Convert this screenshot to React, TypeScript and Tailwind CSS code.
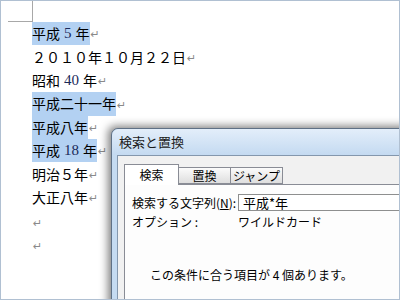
const jp = "font-['Noto_Sans_CJK_JP','Liberation_Sans',sans-serif]";
const serif = "font-['Liberation_Serif','Noto_Sans_CJK_JP',serif]";

function Mark() {
  return <span className="ml-[1px] text-[11px] text-[#8a8a8a] font-['DejaVu_Sans',sans-serif]">↵</span>;
}

function Row({ hl, children }: { hl?: boolean; children: React.ReactNode }) {
  return (
    <div className="flex h-[23.4px] items-stretch">
      <span className={`flex items-center ${hl ? "bg-[#b3d1f2]" : ""}`}>{children}</span>
      <span className="flex items-center pt-[4px]">
        <Mark />
      </span>
    </div>
  );
}

function Num({ v }: { v: string }) {
  return <span className={`${serif} text-[15px] px-[4px] text-[#1a2a5a]`}>{v}</span>;
}

export default function App() {
  return (
    <div className={`relative w-[400px] h-[300px] overflow-hidden border border-[#b0c0d2] bg-white ${jp} text-[14px] text-black`}>
      {/* page corner mark */}
      <div className="ml-[7px] w-[25px] h-[21px] border-r border-b border-[#a8a8a8]" />

      {/* document */}
      <div className="pl-[31px]">
        <Row hl>
          平成<Num v="5" />年
        </Row>
        <Row>２０１０年１０月２２日</Row>
        <Row>
          昭和<Num v="40" />年
        </Row>
        <Row hl>平成二十一年</Row>
        <Row hl>平成八年</Row>
        <Row hl>
          平成<Num v="18" />年
        </Row>
        <Row>明治５年</Row>
        <Row>大正八年</Row>
        <div className="h-[23.4px] flex items-end"><Mark /></div>
        <div className="h-[23.4px] flex items-end"><Mark /></div>
      </div>

      {/* find & replace dialog */}
      <div className="absolute left-[110px] top-[127px] right-[-20px] bottom-[-20px] rounded-tl-[7px] border border-[#5f7186] bg-[#c5dbf1] shadow-[-3px_-2px_8px_rgba(0,0,0,0.5)]">
        <div className="h-[26px] rounded-tl-[7px] bg-gradient-to-b from-[#e3eefa] to-[#c4daf1] flex items-center pl-[7px] text-[13px] text-[#1b1b1b]">
          検索と置換
        </div>
        <div className="ml-[5px] h-full border-l border-t border-[#8497ad] bg-[#f1f1f1] pl-[6px] pt-[8px]">
          <div className="flex items-end h-[20px] text-[12px]">
            <div className="relative z-10 -mb-px w-[55px] h-[21px] bg-white border border-b-0 border-[#898c95] flex items-center justify-center">
              検索
            </div>
            <div className="w-[52px] h-[17px] bg-gradient-to-b from-[#fbfbfb] to-[#dedede] border border-l-0 border-[#898c95] flex items-center justify-center">
              置換
            </div>
            <div className="w-[52px] h-[17px] bg-gradient-to-b from-[#fbfbfb] to-[#dedede] border border-l-0 border-[#898c95] flex items-center justify-center">
              ジャンプ
            </div>
          </div>
          <div className="h-full border border-[#898c95] bg-[#fdfdfd] pl-[7px] pt-[9px] text-[12px]">
            <div className="flex items-center h-[17px]">
              <span className="w-[106px]">
                検索する文字列(<span className="underline">N</span>):
              </span>
              <div className="flex-1 h-[17px] border border-[#8e8f8f] bg-white pl-[4px] flex items-center text-[13px]">
                平成*年
              </div>
            </div>
            <div className="flex items-center h-[16px] mt-[3px]">
              <span className="w-[106px]">オプション :</span>
              <span>ワイルドカード</span>
            </div>
            <div className="ml-[18px] mt-[37px] h-[16px] flex items-center">
              この条件に合う項目が 4 個あります。
            </div>
          </div>
        </div>
      </div>
    </div>
  );
}
